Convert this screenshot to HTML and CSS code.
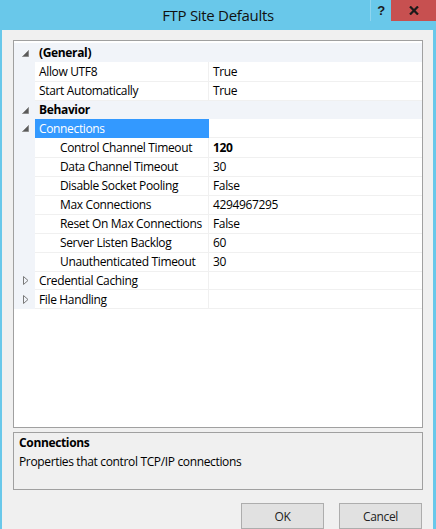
FILE: index.html
```html
<!DOCTYPE html>
<html>
<head>
<meta charset="utf-8">
<link rel="stylesheet" href="styles.css">
</head>
<body>
<div class="window">
  <div class="titlebar">
    <div class="tb-spacer"></div>
    <div class="title">FTP Site Defaults</div>
    <div class="caption-btns">
      <div class="cbtn help">?</div>
      <div class="cbtn close">
        <svg width="10" height="9" viewBox="0 0 10 9"><path d="M1 0.5 L9 8.5 M9 0.5 L1 8.5" stroke="#1a1a1a" stroke-width="2.2" fill="none"/></svg>
      </div>
    </div>
  </div>
  <div class="client">
    <div class="grid">
      <div class="row cat">
        <span class="gutter"><svg class="exp" width="7" height="7" viewBox="0 0 7 7"><path d="M6.5 0.5 L6.5 6.5 L0.5 6.5 Z" fill="#5a5a5a" stroke="#8a8a8a" stroke-width="1"/></svg></span>
        <span class="catname">(General)</span>
      </div>
      <div class="row prop"><span class="gutter"></span><span class="name">Allow UTF8</span><span class="value">True</span></div>
      <div class="row prop"><span class="gutter"></span><span class="name">Start Automatically</span><span class="value">True</span></div>
      <div class="row cat">
        <span class="gutter"><svg class="exp" width="7" height="7" viewBox="0 0 7 7"><path d="M6.5 0.5 L6.5 6.5 L0.5 6.5 Z" fill="#5a5a5a" stroke="#8a8a8a" stroke-width="1"/></svg></span>
        <span class="catname">Behavior</span>
      </div>
      <div class="row prop">
        <span class="gutter"><svg class="exp" width="7" height="7" viewBox="0 0 7 7"><path d="M6.5 0.5 L6.5 6.5 L0.5 6.5 Z" fill="#5a5a5a" stroke="#8a8a8a" stroke-width="1"/></svg></span>
        <span class="name selected">Connections</span><span class="value"></span>
      </div>
      <div class="row prop"><span class="gutter"></span><span class="name child">Control Channel Timeout</span><span class="value bold">120</span></div>
      <div class="row prop"><span class="gutter"></span><span class="name child">Data Channel Timeout</span><span class="value">30</span></div>
      <div class="row prop"><span class="gutter"></span><span class="name child">Disable Socket Pooling</span><span class="value">False</span></div>
      <div class="row prop"><span class="gutter"></span><span class="name child">Max Connections</span><span class="value">4294967295</span></div>
      <div class="row prop"><span class="gutter"></span><span class="name child">Reset On Max Connections</span><span class="value">False</span></div>
      <div class="row prop"><span class="gutter"></span><span class="name child">Server Listen Backlog</span><span class="value">60</span></div>
      <div class="row prop"><span class="gutter"></span><span class="name child">Unauthenticated Timeout</span><span class="value">30</span></div>
      <div class="row prop">
        <span class="gutter"><svg class="col" width="6" height="9" viewBox="0 0 6 9"><path d="M0.5 0.5 L5 4.5 L0.5 8.5 Z" fill="none" stroke="#7a7a7a" stroke-width="1"/></svg></span>
        <span class="name">Credential Caching</span><span class="value"></span>
      </div>
      <div class="row prop">
        <span class="gutter"><svg class="col" width="6" height="9" viewBox="0 0 6 9"><path d="M0.5 0.5 L5 4.5 L0.5 8.5 Z" fill="none" stroke="#7a7a7a" stroke-width="1"/></svg></span>
        <span class="name">File Handling</span><span class="value"></span>
      </div>
    </div>
    <div class="desc">
      <div class="desc-title">Connections</div>
      <div class="desc-text">Properties that control TCP/IP connections</div>
    </div>
    <div class="buttons">
      <div class="button">OK</div>
      <div class="button">Cancel</div>
    </div>
  </div>
</div>
</body>
</html>
```

FILE: styles.css
```css
html, body {
  margin: 0;
  padding: 0;
  background: #f0f0f0;
}
body {
  font-family: "Open Sans", "Noto Sans", sans-serif;
  font-size: 12px;
  letter-spacing: -0.35px;
  color: #000;
}
.window {
  width: 436px;
  height: 529px;
  background: #69c8ea;
  display: flex;
  flex-direction: column;
  overflow: hidden;
}
.titlebar {
  height: 30px;
  display: grid;
  grid-template-columns: 1fr auto 1fr;
  flex: none;
}
.title {
  font-size: 15px;
  line-height: 30px;
  color: #111;
  letter-spacing: -0.3px;
}
.caption-btns {
  display: flex;
  justify-content: flex-end;
  align-items: flex-start;
}
.cbtn {
  height: 21px;
  display: flex;
  align-items: center;
  justify-content: center;
}
.help {
  width: 20px;
  border-left: 1px solid #8fd5ef;
  font-weight: bold;
  font-size: 13px;
  color: #1a1a1a;
  font-family: "Liberation Sans", sans-serif;
}
.close {
  width: 45px;
  background: #c75050;
}
.client {
  flex: 1;
  margin: 0 3px 0 2px;
  background: #f0f0f0;
  padding: 10px 10px 0 11px;
  display: flex;
  flex-direction: column;
}
.grid {
  height: 384px;
  border: 1px solid #a0a0a0;
  background: #fff;
  padding-top: 2px;
  flex: none;
}
.row {
  display: grid;
  grid-template-columns: 21px 174px 1fr;
  height: 19px;
  line-height: 19px;
}
.gutter {
  background: #f1f4f9;
  display: flex;
  align-items: center;
  justify-content: center;
  padding-left: 2px;
}
.col {
  margin-left: 1px;
}
.cat {
  background: #f1f4f9;
}
.catname {
  grid-column: 2 / 4;
  font-weight: bold;
  padding-left: 4px;
  line-height: 20px;
}
.name {
  padding-left: 4px;
  border-right: 1px solid #f0f0f0;
  border-bottom: 1px solid #f0f0f0;
  white-space: nowrap;
  overflow: hidden;
}
.name.child {
  padding-left: 25px;
}
.name.selected {
  background: #3399ff;
  color: #fff;
  border-right-color: #3399ff;
  border-bottom-color: #3399ff;
}
.value {
  padding-left: 4px;
  border-bottom: 1px solid #f0f0f0;
  white-space: nowrap;
}
.value.bold {
  font-weight: bold;
}
.desc {
  margin-top: 4px;
  height: 58px;
  box-sizing: border-box;
  border: 1px solid #a0a0a0;
  background: #f0f0f0;
  padding: 0 5px;
  flex: none;
}
.desc-title {
  font-weight: bold;
  line-height: 19px;
}
.desc-text {
  line-height: 19px;
}
.buttons {
  margin-top: 13px;
  display: flex;
  justify-content: flex-end;
  gap: 15px;
  padding-right: 1px;
}
.button {
  width: 81px;
  height: 24px;
  border: 1px solid #adadad;
  background: #e1e1e1;
  display: flex;
  align-items: center;
  justify-content: center;
  color: #222;
}
```
